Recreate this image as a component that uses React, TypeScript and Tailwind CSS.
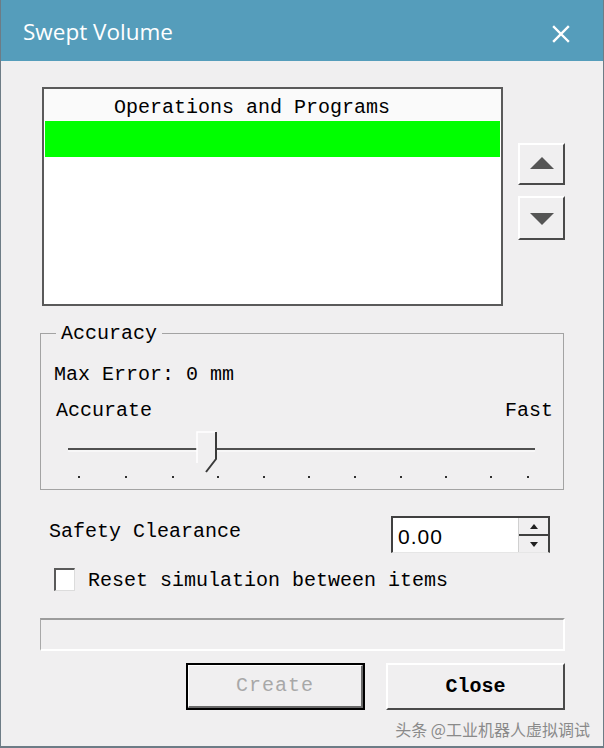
const MONO = "font-['Liberation_Mono','DejaVu_Sans_Mono',monospace]";

function CloseGlyph() {
  return (
    <svg width="18" height="18" viewBox="0 0 18 18" className="block">
      <path d="M2 2 L16 16 M16 2 L2 16" stroke="#ffffff" strokeWidth="2.4" strokeLinecap="square" />
    </svg>
  );
}

function Triangle({ up }: { up: boolean }) {
  return (
    <svg width="24" height="12" viewBox="0 0 24 12" className="block">
      <path d={up ? "M12 0 L24 12 L0 12 Z" : "M0 0 L24 0 L12 12 Z"} fill="#555555" />
    </svg>
  );
}

function Slider() {
  const ticks = [37, 84, 131, 176, 222, 267, 313, 359, 404, 449, 486];
  return (
    <svg width="522" height="61" viewBox="0 0 522 61" className="block">
      <line x1="27" y1="22" x2="494" y2="22" stroke="#505050" strokeWidth="2" />
      <line x1="27" y1="24" x2="494" y2="24" stroke="#ffffff" strokeWidth="1" />
      <polygon points="156,5 175,5 175,32 165,45 156,36" fill="#f0eff0" />
      <path d="M156 36 L156 5 L175 5" stroke="#ffffff" strokeWidth="1.5" fill="none" />
      <path d="M175 5 L175 32 L165 45" stroke="#3a3a3a" strokeWidth="2" fill="none" />
      {ticks.map((x) => (
        <rect key={x} x={x} y="49" width="2" height="2" fill="#303030" />
      ))}
    </svg>
  );
}

function SpinArrow({ up }: { up: boolean }) {
  return (
    <svg width="8" height="5" viewBox="0 0 8 5" className="block">
      <path d={up ? "M4 0 L8 5 L0 5 Z" : "M0 0 L8 0 L4 5 Z"} fill="#202020" />
    </svg>
  );
}

export default function App() {
  return (
    <div className="w-[604px] h-[748px] flex flex-col border-x border-b-2 border-[#6d7c86] bg-[#f0eff0] overflow-hidden">
      {/* title bar */}
      <div className="h-[61px] shrink-0 bg-[#559dbb] flex items-center justify-between pl-[23px] pr-[34px] -mx-px">
        <span className="text-white text-[22.5px] font-['Open_Sans','Noto_Sans',sans-serif] leading-none pt-[4px]">
          Swept Volume
        </span>
        <span className="pt-[6px]">
          <CloseGlyph />
        </span>
      </div>

      <div className={`flex-1 flex flex-col ${MONO} text-[20px] text-black leading-none`}>
        {/* list + order buttons */}
        <div className="flex mt-[26px] ml-[41px]">
          <div className="w-[461px] h-[219px] border-2 border-[#5a5a5a] bg-white flex flex-col">
            <div className="h-[32px] bg-[#fafafa] flex items-center pl-[70px] pt-[5px]">Operations and Programs</div>
            <div className="h-[36px] bg-[#00ff00] mx-px" />
          </div>
          <div className="flex flex-col ml-[15px] mt-[56px] gap-[11px]">
            <button className="w-[47px] h-[42px] border-t-2 border-l-2 border-b-2 border-r-2 border-t-white border-l-white border-b-[#4a4a4a] border-r-[#4a4a4a] flex items-center justify-center pb-[2px]">
              <Triangle up />
            </button>
            <button className="w-[47px] h-[44px] border-t-2 border-l-2 border-b-2 border-r-2 border-t-white border-l-white border-b-[#4a4a4a] border-r-[#4a4a4a] flex items-center justify-center pt-[2px]">
              <Triangle up={false} />
            </button>
          </div>
        </div>

        {/* accuracy group */}
        <div className="relative mt-[27px] ml-[39px] w-[524px] h-[157px] border border-[#a3a3a3]">
          <span className="absolute -top-[10px] left-[15px] px-[5px] bg-[#f0eff0]">Accuracy</span>
          <div className="h-[36px] mt-[21px] flex items-center pl-[13px] pt-[4px]">Max Error: 0 mm</div>
          <div className="h-[36px] flex items-center justify-between pl-[15px] pr-[10px] pt-[4px]">
            <span>Accurate</span>
            <span>Fast</span>
          </div>
          <Slider />
        </div>

        {/* safety clearance */}
        <div className="flex items-center mt-[26px] ml-[48px]">
          <span className="w-[342px] pb-[6px]">Safety Clearance</span>
          <div className="w-[159px] h-[37px] flex bg-white border-t-2 border-l-2 border-r-2 border-b border-t-[#404040] border-l-[#404040] border-r-[#404040] border-b-[#e6e6e6]">
            <span className="flex-1 flex items-center pl-[5px] pt-[2px] font-['Liberation_Sans','Arial',sans-serif] text-[21px] tracking-[1px]">
              0.00
            </span>
            <div className="w-[30px] flex flex-col bg-[#f0eff0] border-l border-[#d0d0d0]">
              <div className="flex-1 flex items-center justify-center border-b-2 border-[#404040]">
                <SpinArrow up />
              </div>
              <div className="flex-1 flex items-center justify-center">
                <SpinArrow up={false} />
              </div>
            </div>
          </div>
        </div>

        {/* reset checkbox */}
        <div className="flex items-center mt-[15px] ml-[53px]">
          <span className="w-[21px] h-[23px] bg-white border-t-2 border-l-2 border-t-[#5a5a5a] border-l-[#5a5a5a] border-r border-b border-r-[#dcdcdc] border-b-[#dcdcdc]" />
          <span className="ml-[13px] pt-[2px]">Reset simulation between items</span>
        </div>

        {/* progress */}
        <div className="mt-[27px] ml-[39px] w-[525px] h-[33px] border-t-2 border-l border-t-[#9c9c9c] border-l-[#a8a8a8] border-r-2 border-b-2 border-r-white border-b-white" />

        {/* buttons */}
        <div className="flex mt-[12px] ml-[185px] gap-[21px]">
          <button className="w-[179px] h-[47px] border-2 border-black flex">
            <span className="flex-1 flex items-center justify-center border-t border-l border-white border-b-2 border-r-2 border-b-[#6a6a6a] border-r-[#6a6a6a] text-[#a8a8a8] tracking-[1px]">
              Create
            </span>
          </button>
          <button className="w-[179px] h-[47px] border-t-2 border-l-2 border-t-white border-l-white border-b-2 border-r-2 border-b-[#4a4a4a] border-r-[#4a4a4a] flex items-center justify-center font-bold">
            Close
          </button>
        </div>

        {/* watermark */}
        <div className="mt-[11px] pr-[13px] text-right text-[#8a8a8a] text-[16px] font-['Noto_Sans_CJK_SC',sans-serif] leading-none">
          头条 @工业机器人虚拟调试
        </div>
      </div>
    </div>
  );
}
